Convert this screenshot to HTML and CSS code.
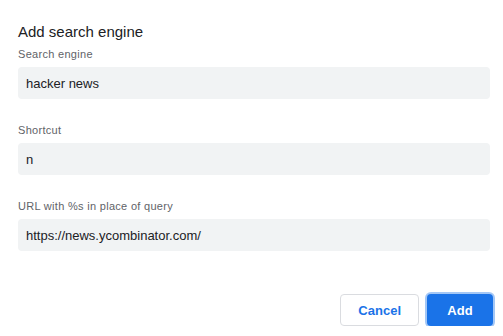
FILE: index.html
```html
<!DOCTYPE html>
<html lang="en">
<head>
    <meta charset="UTF-8">
    <title>Add search engine</title>
    <link rel="stylesheet" href="styles.css">
</head>
<body>
    <div class="dialog">
        <div class="dialog-title">Add search engine</div>
        <div class="field">
            <label class="field-label" for="engine">Search engine</label>
            <input class="field-input" id="engine" type="text" value="hacker news">
        </div>
        <div class="field">
            <label class="field-label" for="keyword">Shortcut</label>
            <input class="field-input" id="keyword" type="text" value="n">
        </div>
        <div class="field">
            <label class="field-label" for="url">URL with %s in place of query</label>
            <input class="field-input" id="url" type="text" value="https://news.ycombinator.com/">
        </div>
        <div class="button-row">
            <button class="btn btn-cancel">Cancel</button>
            <button class="btn btn-action">Add</button>
        </div>
    </div>
</body>
</html>
```

FILE: styles.css
```css
body, html {
    margin: 0;
    background-color: #fff;
    font-family: 'Liberation Sans', Arial, sans-serif;
    color: #202124;
}
.dialog {
    padding: 22px 13px 0 18px;
}
.dialog-title {
    font-size: 15px;
    line-height: 20px;
    margin-bottom: 5px;
}
.field {
    display: flex;
    flex-direction: column;
    margin-bottom: 24px;
}
.field-label {
    font-size: 11px;
    line-height: 14px;
    letter-spacing: 0.3px;
    color: #5f6368;
    margin-bottom: 6px;
}
.field-input {
    box-sizing: border-box;
    height: 32px;
    width: 100%;
    margin: 0;
    padding: 0 8px;
    border: none;
    border-radius: 4px;
    background-color: #f1f3f4;
    font-family: inherit;
    font-size: 13px;
    color: #202124;
    outline: none;
}
.button-row {
    display: flex;
    justify-content: flex-end;
    gap: 8px;
    margin-top: 43px;
    margin-right: -3px;
}
.btn {
    box-sizing: border-box;
    height: 32px;
    padding: 0 17px;
    border-radius: 4px;
    font-family: inherit;
    font-size: 13px;
    font-weight: bold;
    cursor: pointer;
}
.btn-cancel {
    background-color: #fff;
    border: 1px solid #dadce0;
    color: #1a73e8;
}
.btn-action {
    min-width: 66px;
    background-color: #1a73e8;
    border: none;
    color: #fff;
    box-shadow: 0 0 0 2px rgba(26, 115, 232, 0.4);
}
```
